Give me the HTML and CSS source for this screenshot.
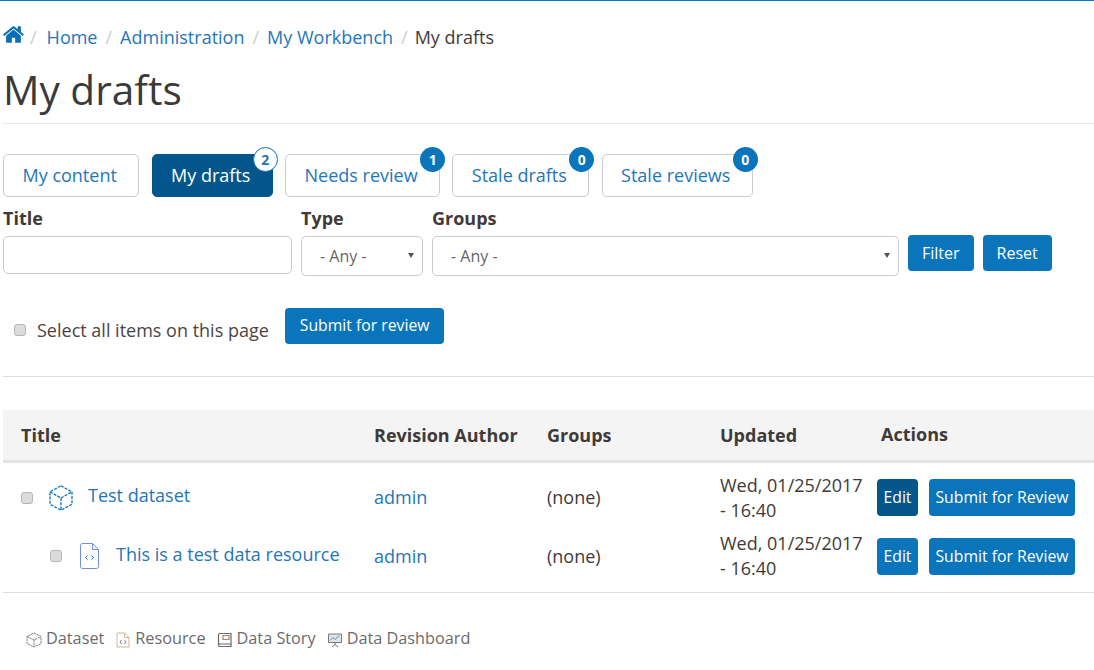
FILE: index.html
```html
<!DOCTYPE html>
<html lang="en">
<head>
<meta charset="utf-8">
<title>My drafts</title>
<link rel="stylesheet" href="styles.css">
</head>
<body>
<main class="page">
  <nav class="crumbs">
    <a class="crumb-home" href="#"><svg class="home-icon" viewBox="0 0 1792 1792"><path d="M1472 992v480q0 26-19 45t-45 19h-384v-384h-256v384h-384q-26 0-45-19t-19-45v-480q0-1 .5-3t.5-3l575-474 575 474q1 2 1 6zm223-69l-62 74q-8 9-21 11h-3q-13 0-21-7l-692-577-692 577q-12 8-24 7-13-2-21-11l-62-74q-8-10-7-23.5t11-21.5l719-599q32-26 76-26t76 26l244 204v-195q0-14 9-23t23-9h192q14 0 23 9t9 23v408l219 182q10 8 11 21.5t-7 23.5z"/></svg></a>
    <span class="sep sep-first">/</span>
    <a href="#">Home</a>
    <span class="sep">/</span>
    <a href="#">Administration</a>
    <span class="sep">/</span>
    <a href="#">My Workbench</a>
    <span class="sep">/</span>
    <span class="crumb-current">My drafts</span>
  </nav>
  <h1 class="title">My drafts</h1>

  <div class="tabs">
    <a class="tab" href="#">My content</a>
    <a class="tab tab-active" href="#">My drafts<span class="badge badge-light">2</span></a>
    <a class="tab" href="#">Needs review<span class="badge">1</span></a>
    <a class="tab" href="#">Stale drafts<span class="badge">0</span></a>
    <a class="tab" href="#">Stale reviews<span class="badge">0</span></a>
  </div>

  <form class="filters">
    <div class="field field-title">
      <label class="field-label">Title</label>
      <input class="text-input" type="text">
    </div>
    <div class="field field-type">
      <label class="field-label">Type</label>
      <span class="select-wrap"><select class="select"><option>- Any -</option></select></span>
    </div>
    <div class="field field-groups">
      <label class="field-label">Groups</label>
      <span class="select-wrap"><select class="select"><option>- Any -</option></select></span>
    </div>
    <button class="btn btn-filter" type="button">Filter</button>
    <button class="btn btn-filter" type="button">Reset</button>
  </form>

  <div class="bulk">
    <label class="select-all"><input class="check" type="checkbox"> Select all items on this page</label>
    <button class="btn btn-bulk" type="button">Submit for review</button>
  </div>

  <table class="grid">
    <colgroup>
      <col class="col-title"><col class="col-author"><col class="col-groups"><col class="col-updated"><col>
    </colgroup>
    <thead>
      <tr>
        <th>Title</th>
        <th>Revision Author</th>
        <th>Groups</th>
        <th>Updated</th>
        <th class="th-actions">Actions</th>
      </tr>
    </thead>
    <tbody>
      <tr class="row-first">
        <td><div class="item">
          <input class="check" type="checkbox">
          <svg class="item-icon" viewBox="0 0 24 26" fill="none" stroke="#0a75bb" stroke-width="1.3" stroke-dasharray="3 1.2"><path d="M12 .8 L23 6.800 V19.200 L12 25.200 L1 19.200 V6.800 Z"/><path d="M1 6.800 L12 13 L23 6.800 M12 13 V25.200"/></svg>
          <a class="item-link" href="#">Test dataset</a>
        </div></td>
        <td><a href="#">admin</a></td>
        <td>(none)</td>
        <td>Wed, 01/25/2017 - 16:40</td>
        <td class="cell-actions"><a class="btn btn-small btn-dark" href="#">Edit</a><a class="btn btn-small" href="#">Submit for Review</a></td>
      </tr>
      <tr class="row-second">
        <td><div class="item item-child">
          <input class="check" type="checkbox">
          <svg class="item-icon file-icon" viewBox="0 0 19 26" fill="none" stroke="#6f8fd8" stroke-width="1"><path d="M2.500 .5 H12.500 L18.500 6.500 V23.500 Q18.500 25.500 16.500 25.500 H2.500 Q.5 25.500 .5 23.500 V2.500 Q.5 .5 2.500 .5 Z"/><path d="M12.500 .5 V6.500 H18.500"/><path stroke="#0a75bb" d="M7.500 12.500 L5.500 14.500 L7.500 16.500 M11.500 12.500 L13.500 14.500 L11.500 16.500"/></svg>
          <a class="item-link" href="#">This is a test data resource</a>
        </div></td>
        <td><a href="#">admin</a></td>
        <td>(none)</td>
        <td>Wed, 01/25/2017 - 16:40</td>
        <td class="cell-actions"><a class="btn btn-small" href="#">Edit</a><a class="btn btn-small" href="#">Submit for Review</a></td>
      </tr>
    </tbody>
  </table>

  <ul class="legend">
    <li class="legend-item">
      <svg class="legend-icon" viewBox="0 0 16 16" fill="none" stroke="#77787a" stroke-width="1" stroke-dasharray="2.200 .8"><path d="M8 1 L15 4.500 V11.500 L8 15 L1 11.500 V4.500 Z"/><path d="M1 4.500 L8 8 L15 4.500 M8 8 V15"/></svg>
      Dataset
    </li>
    <li class="legend-item">
      <svg class="legend-icon" viewBox="0 0 16 16" fill="none" stroke="#c9b9a0" stroke-width="1"><path d="M2 1 H9.500 L14 5.500 V15 H2 Z"/><path d="M9.500 1 V5.500 H14"/><path stroke="#8a7f7f" d="M6.500 8 L5 10 L6.500 12 M9.500 8 L11 10 L9.500 12"/></svg>
      Resource
    </li>
    <li class="legend-item">
      <svg class="legend-icon" viewBox="0 0 16 16" fill="none" stroke="#6a6a6a" stroke-width="1.200"><path d="M3 1.500 H14 V12 H3 Q1.500 12 1.500 13.200 V3 Q1.500 1.500 3 1.500 Z"/><path d="M1.500 13.200 Q1.500 14.500 3 14.500 H14 V12"/><path stroke="#a0886a" d="M6 3.500 H12 V7.500 H6 Z"/></svg>
      Data Story
    </li>
    <li class="legend-item">
      <svg class="legend-icon" viewBox="0 0 16 16" fill="none" stroke="#7a7a7a" stroke-width="1"><path d="M1.500 2 H14.500 V10.500 H1.500 Z" fill="#dfe6ea"/><path stroke="#6f8aa0" d="M3 8.500 L6 5.500 L8 7.500 L12.500 3.500"/><path d="M8 10.500 V13 M5 15 L8 12.500 L11 15"/></svg>
      Data Dashboard
    </li>
  </ul>
</main>
</body>
</html>
```

FILE: styles.css
```css
* { box-sizing: border-box; }

html, body { margin: 0; padding: 0; }

body {
  font-family: "Open Sans", "Noto Sans", sans-serif;
  font-size: 18px;
  line-height: 25px;
  color: #3f3a38;
  background: #fff;
  border-top: 1px solid #0a75bb;
  overflow: hidden;
}

a { color: #1f76bb; text-decoration: none; }

.page { padding-left: 3px; height: 669px; }

/* breadcrumb */
.crumbs {
  display: flex;
  align-items: center;
  height: 25px;
  margin-top: 24px;
  white-space: nowrap;
}
.crumb-home { display: flex; }
.home-icon { width: 23px; height: 23px; fill: #0a6fb5; margin-top: -6px; margin-left: -1px; }
.sep { color: #ccc; margin: 0 8px; }
.sep-first { margin: 0 10px 0 5px; }
.crumb-current { color: #3f3a38; margin-left: -1px; }

/* heading */
.title {
  margin: 0;
  padding: 11px 0 5px;
  height: 74px;
  font-size: 40.600px;
  line-height: 58px;
  font-weight: 400;
  color: #3a3a3a;
  border-bottom: 1px solid #e8e8e8;
}

/* tabs */
.tabs { display: flex; gap: 12.200px; margin-top: 30px; }
.tab {
  position: relative;
  display: block;
  height: 43px;
  padding: 8px 21.500px 8px 18.500px;
  border: 1px solid #ccc;
  border-radius: 5px;
  background: #fff;
  white-space: nowrap;
}
.tab-active { background: #03568c; border-color: #03568c; color: #fff; }
.badge {
  position: absolute;
  top: -8px;
  right: -6px;
  width: 25px;
  height: 25px;
  border-radius: 50%;
  background: #0a75bb;
  color: #fff;
  font-size: 14px;
  line-height: 25px;
  font-weight: 700;
  text-align: center;
}
.badge-light {
  background: #fff;
  color: #1f76bb;
  border: 1px solid #0a75bb;
  line-height: 23px;
}

/* filters */
.filters { display: flex; align-items: flex-start; margin-top: 8px; }
.field { display: flex; flex-direction: column; }
.field-title { width: 289px; margin-right: 9px; }
.field-type { width: 122px; margin-right: 9px; }
.field-groups { width: 467px; margin-right: 9px; }
.field-label { font-weight: 700; font-size: 18px; height: 26px; line-height: 26px; margin-bottom: 5px; }
.text-input {
  display: block;
  width: 100%;
  height: 38px;
  border: 1px solid #ccc;
  border-radius: 5px;
  background: #fff;
}
.select-wrap { position: relative; display: block; }
.select-wrap::after {
  content: "";
  position: absolute;
  right: 9px;
  top: 17px;
  border-left: 3px solid transparent;
  border-right: 3px solid transparent;
  border-top: 5px solid #555;
}
.select {
  appearance: none;
  display: block;
  width: 100%;
  height: 40px;
  padding: 0 18px;
  border: 1px solid #ccc;
  border-radius: 5px;
  background: #fff;
  font: inherit;
  font-size: 16px;
  color: #666;
}

.btn {
  display: inline-block;
  border: 0;
  border-radius: 4px;
  background: #0a75bb;
  color: #fff;
  font-family: inherit;
  font-size: 15.750px;
  line-height: 36px;
  height: 36px;
  padding: 0 15px;
  white-space: nowrap;
}
.btn-filter { margin: 30px 9px 0 0; padding: 0 14px; font-size: 16px; }
.btn-bulk { padding-bottom: 2px; line-height: 34px; }

/* bulk */
.bulk { display: flex; align-items: flex-start; margin-top: 32px; height: 69px; border-bottom: 1px solid #ddd; }
.select-all { display: flex; align-items: center; gap: 11px; margin: 10px 16px 0 11px; color: #4a4543; }
.select-all .check { margin-bottom: 2px; }
.check {
  appearance: none;
  flex: none;
  display: block;
  width: 12px;
  height: 12px;
  margin: 0;
  border: 1px solid #b5b5b5;
  border-radius: 3px;
  background: #dcdcdc;
}

/* table */
.grid {
  width: 1091px;
  margin-top: 33px;
  border-collapse: collapse;
  table-layout: fixed;
  border-bottom: 1px solid #ddd;
}
.col-title { width: 353px; }
.col-author { width: 173px; }
.col-groups { width: 173px; }
.col-updated { width: 162px; }
.grid th {
  height: 51px;
  padding: 2px 0 0 18px;
  background: #f4f4f4;
  border-bottom: 3px solid #e3e3e3;
  font-size: 18px;
  font-weight: 700;
  text-align: left;
}
.grid th.th-actions { padding: 0 0 1px 17px; }
.grid td { padding: 0 0 0 18px; height: 70px; vertical-align: middle; }
.grid .row-first td { height: 60px; padding-top: 10px; }
.grid .row-second td { padding-bottom: 2px; }

.item { display: flex; align-items: center; }
.item-child { padding-left: 29px; }
.item .check { margin-right: 16px; }
.item-icon { width: 24px; height: 26px; margin-right: 15px; flex: none; }
.file-icon { width: 19px; margin-right: 17px; margin-left: 2px; }
.item-link { margin-bottom: 5px; }
.item-child .item-link { margin-bottom: 3px; }
.grid td.cell-actions { padding-left: 13px; white-space: nowrap; }
.btn-small { height: 37px; line-height: 36px; padding: 0 6.500px; margin-right: 11px; }
.btn-dark { background: #03568c; }

/* legend */
.legend { list-style: none; display: flex; gap: 11px; margin: 33px 0 0; padding: 0 0 0 23px; font-size: 16.250px; color: #6b6b6b; }
.legend-item { display: flex; align-items: center; gap: 4px; white-space: nowrap; }
.legend-icon { width: 16px; height: 16px; flex: none; margin-top: 2px; }
```
